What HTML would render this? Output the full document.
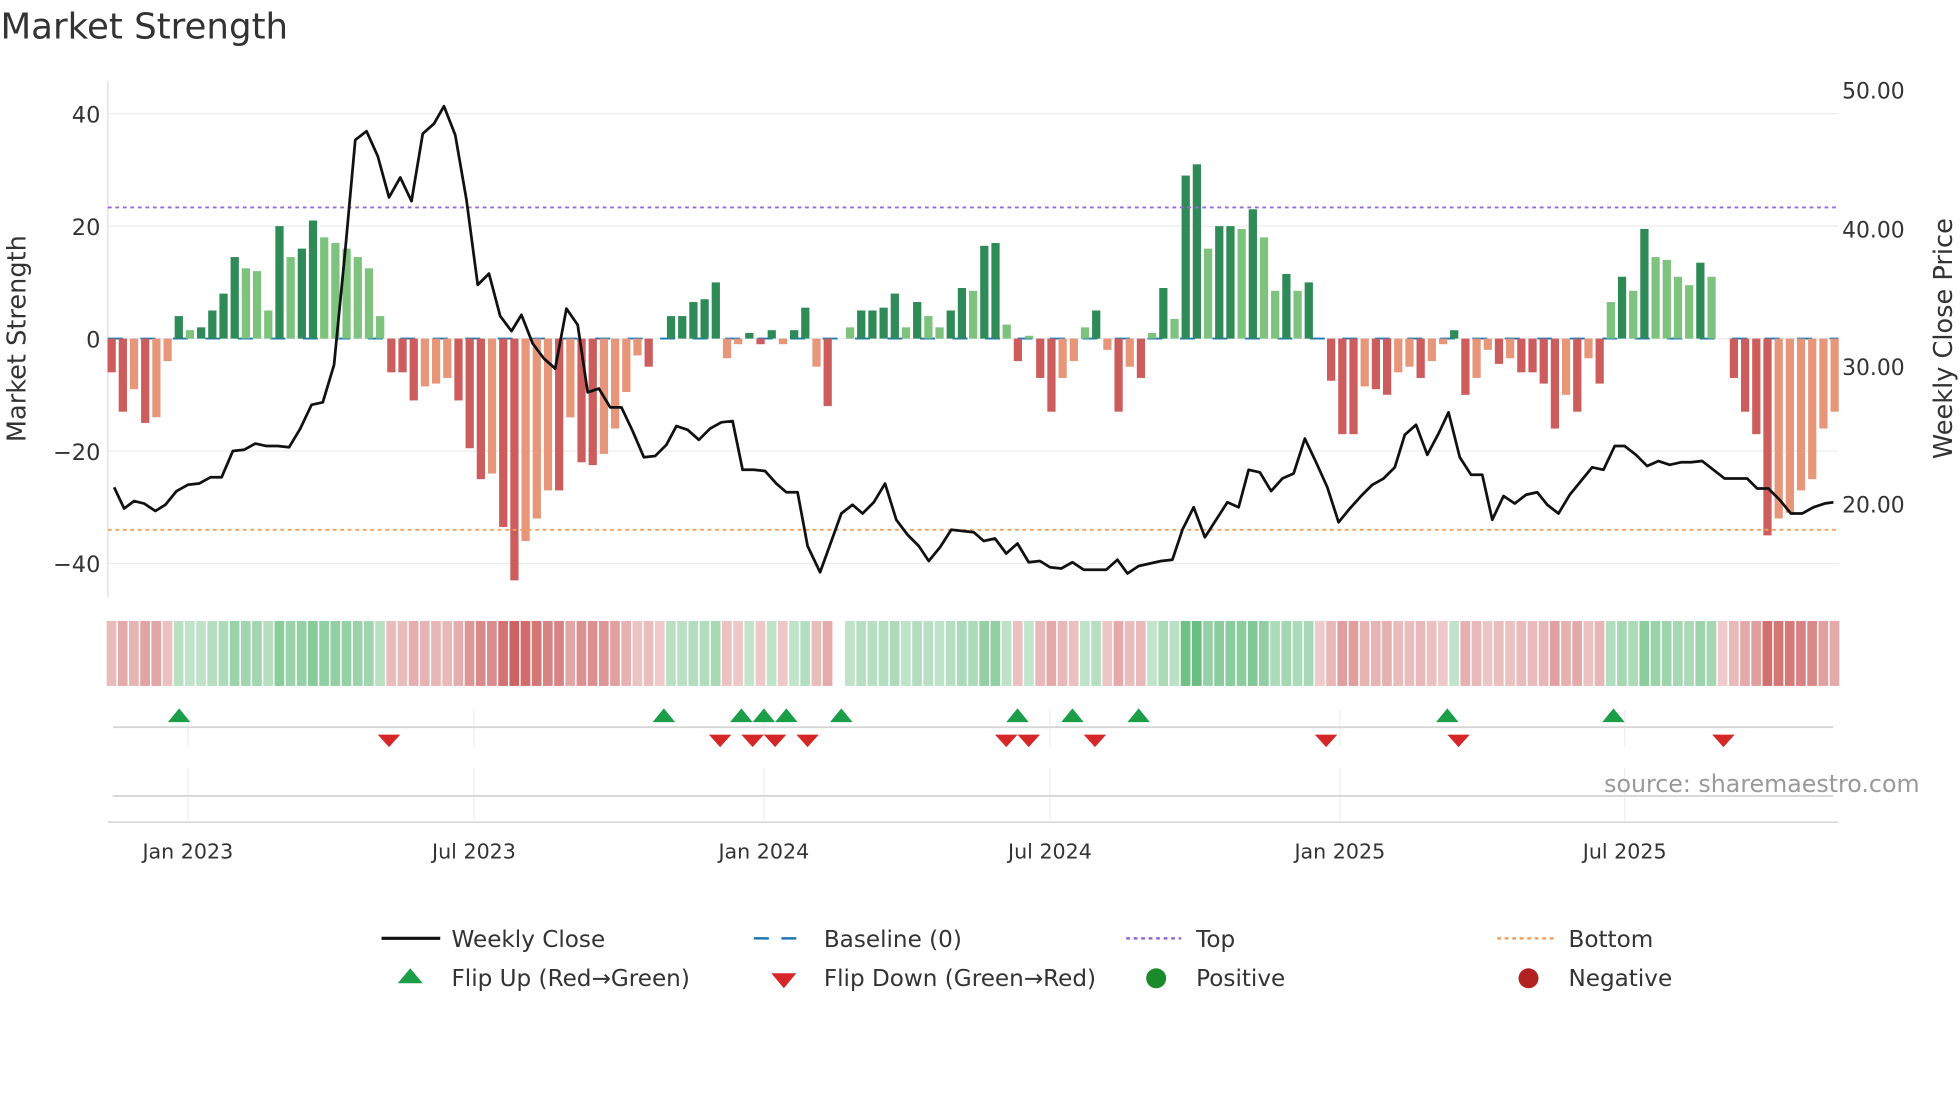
<!DOCTYPE html>
<html><head><meta charset="utf-8"><style>
html,body{margin:0;padding:0;background:#fff;}
svg{display:block;font-family:"DejaVu Sans","Liberation Sans",sans-serif;}
</style></head><body>
<svg id="s" width="1960" height="1102" viewBox="0 0 1568 882" xmlns="http://www.w3.org/2000/svg">
<rect width="1568" height="882" fill="#fff"/>
<text x="0" y="31" font-size="28.5" fill="#333">Market Strength</text>
<g stroke="#ececec" stroke-width="1">
<line x1="86" x2="1471" y1="91" y2="91"/><line x1="86" x2="1471" y1="181" y2="181"/>
<line x1="86" x2="1471" y1="271" y2="271"/><line x1="86" x2="1471" y1="361" y2="361"/>
<line x1="86" x2="1471" y1="451" y2="451"/>
</g>
<line x1="86" x2="86" y1="65" y2="478" stroke="#ddd"/>
<g font-size="18" fill="#333" text-anchor="end">
<text x="80" y="98">40</text><text x="80" y="188">20</text><text x="80" y="278">0</text>
<text x="80" y="368">−20</text><text x="80" y="458">−40</text>
</g>
<g font-size="17.5" fill="#333">
<text x="1474" y="79">50.00</text><text x="1474" y="190">40.00</text>
<text x="1474" y="300">30.00</text><text x="1474" y="410">20.00</text>
</g>
<text transform="translate(20,271) rotate(-90)" font-size="20.5" fill="#333" text-anchor="middle">Market Strength</text>
<text transform="translate(1562,271) rotate(-90)" font-size="20.5" fill="#333" text-anchor="middle">Weekly Close Price</text>
<line x1="86" x2="1471" y1="271" y2="271" stroke="#1f77b4" stroke-width="1.5" stroke-dasharray="12,14"/>
<g id="bars"></g>
<line x1="86" x2="1471" y1="166" y2="166" stroke="#9467dd" stroke-width="1.5" stroke-dasharray="3,3"/>
<line x1="86" x2="1471" y1="424" y2="424" stroke="#f0a060" stroke-width="1.5" stroke-dasharray="3,3"/>
<polyline id="price" fill="none" stroke="#111" stroke-width="2.2" stroke-linejoin="round"/>
<g id="strip"></g>
<g stroke="#eee" stroke-width="1">
<line x1="150" x2="150" y1="568" y2="598"/><line x1="379" x2="379" y1="568" y2="598"/>
<line x1="611" x2="611" y1="568" y2="598"/><line x1="840" x2="840" y1="568" y2="598"/>
<line x1="1072" x2="1072" y1="568" y2="598"/><line x1="1300" x2="1300" y1="568" y2="598"/>
<line x1="150" x2="150" y1="615" y2="656"/><line x1="379" x2="379" y1="615" y2="656"/>
<line x1="611" x2="611" y1="615" y2="656"/><line x1="840" x2="840" y1="615" y2="656"/>
<line x1="1072" x2="1072" y1="615" y2="656"/><line x1="1300" x2="1300" y1="615" y2="656"/>
</g>
<line x1="90" x2="1467" y1="582" y2="582" stroke="#d6d6d6" stroke-width="1.5"/>
<line x1="90" x2="1467" y1="637" y2="637" stroke="#d6d6d6" stroke-width="1.5"/>
<line x1="86" x2="1471" y1="658" y2="658" stroke="#ccc" stroke-width="1"/>
<g id="marks"></g>
<text x="1536" y="634" font-size="19" fill="#999" text-anchor="end">source: sharemaestro.com</text>
<g font-size="16.5" fill="#333" text-anchor="middle">
<text x="150" y="687">Jan 2023</text><text x="379" y="687">Jul 2023</text><text x="611" y="687">Jan 2024</text>
<text x="840" y="687">Jul 2024</text><text x="1072" y="687">Jan 2025</text><text x="1300" y="687">Jul 2025</text>
</g>
<g font-size="18.5" fill="#333">
<line x1="305" x2="352" y1="751" y2="751" stroke="#111" stroke-width="2.5"/>
<text x="361" y="758">Weekly Close</text>
<line x1="603" x2="647" y1="751" y2="751" stroke="#1f77b4" stroke-width="2" stroke-dasharray="12,10"/>
<text x="659" y="758">Baseline (0)</text>
<line x1="901" x2="945" y1="751" y2="751" stroke="#9467dd" stroke-width="2" stroke-dasharray="3,3"/>
<text x="957" y="758">Top</text>
<line x1="1198" x2="1243" y1="751" y2="751" stroke="#f0a060" stroke-width="2" stroke-dasharray="3,3"/>
<text x="1255" y="758">Bottom</text>
<polygon points="318,787 338,787 328,775" fill="#1a9e48"/>
<text x="361" y="789">Flip Up (Red→Green)</text>
<polygon points="617,779 637,779 627,791" fill="#d62728"/>
<text x="659" y="789">Flip Down (Green→Red)</text>
<circle cx="925" cy="783" r="8" fill="#1a8a2a"/>
<text x="957" y="789">Positive</text>
<circle cx="1223" cy="783" r="8" fill="#b22222"/>
<text x="1255" y="789">Negative</text>
</g>
</svg>
<script>
var v=[-6,-13,-9,-15,-14,-4,4,1.5,2,5,8,14.5,12.5,12,5,20,14.5,16,21,18,17,16,14.5,12.5,4,-6,-6,-11,-8.5,-8,-7,-11,-19.5,-25,-24,-33.5,-43,-36,-32,-27,-27,-14,-22,-22.5,-20.5,-16,-9.5,-3,-5,0,4,4,6.5,7,10,-3.5,-1,1,-1,1.5,-1,1.5,5.5,-5,-12,null,2,5,5,5.5,8,2,6.5,4,2,5,9,8.5,16.5,17,2.5,-4,0.5,-7,-13,-7,-4,2,5,-2,-13,-5,-7,1,9,3.5,29,31,16,20,20,19.5,23,18,8.5,11.5,8.5,10,0,-7.5,-17,-17,-8.5,-9,-10,-6,-5,-7,-4,-1,1.5,-10,-7,-2,-4.5,-3.5,-6,-6,-8,-16,-10,-13,-3.5,-8,6.5,11,8.5,19.5,14.5,14,11,9.5,13.5,11,0,-7,-13,-17,-35,-32,-31,-27,-25,-16,-13];
var n=v.length,x0=89,x1=1468,dx=(x1-x0)/(n-1),ns="http://www.w3.org/2000/svg";
function el(t,a,p){var e=document.createElementNS(ns,t);for(var k in a)e.setAttribute(k,a[k]);p.appendChild(e);return e;}
var B=document.getElementById('bars'),S=document.getElementById('strip');
var prev=0;
for(var i=0;i<n;i++){var x=x0+i*dx,val=v[i];if(val===null){continue;}
 var dark=Math.abs(val)>=Math.abs(prev);prev=val;
 var c=val>=0?(dark?'#2e8b57':'#7dc27d'):(dark?'#cd5c5c':'#e8967a');
 var h=Math.abs(val)*4.5,y=val>=0?271-h:271;
 if(h>0.3)el('rect',{x:x-3.3,y:y,width:6.6,height:h,fill:c},B);
 var m=Math.min(Math.abs(val)/40,1),a=0.3+0.6*m;
 var sc=val>=0?'rgba(60,170,90,'+a+')':'rgba(200,80,80,'+a+')';
 if(val===0)sc='rgba(200,80,80,0.3)';
 el('rect',{x:x-dx/2+0.5,y:497,width:dx-1.2,height:52,fill:sc},S);
}
var p="91,390 99,407 107,401 115,403 124,409 132,404 141,393 150,388 159,387 168,382 177,382 186,361 195,360 204,355 213,357 222,357 231,358 240,343 249,324 258,322 267,292 276,200 284,112 293,105 302,125 311,158 320,142 329,161 338,107 347,99 355,85 364,108 373,160 382,228 391,219 400,253 409,265 417,252 426,275 435,287 444,295 453,247 462,260 470,314 479,311 488,326 497,326 506,345 515,366 524,365 533,356 541,341 550,344 559,352 568,343 577,338 586,337 594,376 603,376 612,377 621,387 629,394 638,394 646,437 656,458 664,436 673,411 682,404 690,411 699,402 708,387 717,416 726,428 735,437 743,449 752,438 761,424 770,425 779,426 787,433 796,431 805,443 814,435 823,450 832,449 840,454 849,455 858,450 867,456 876,456 885,456 894,448 902,459 911,453 920,451 929,449 938,448 946,424 955,406 964,430 973,416 982,402 991,406 999,376 1008,378 1017,393 1026,383 1035,379 1044,351 1053,370 1062,390 1071,418 1080,407 1089,397 1098,388 1107,383 1116,374 1124,348 1133,340 1142,364 1151,347 1159,330 1168,366 1177,380 1186,380 1194,416 1203,397 1212,403 1221,396 1230,394 1238,404 1247,411 1256,396 1265,385 1274,374 1283,376 1292,357 1300,357 1309,364 1318,373 1327,369 1336,372 1345,370 1353,370 1362,369 1371,376 1380,383 1389,383 1398,383 1406,391 1415,391 1424,400 1433,411 1442,411 1451,406 1460,403 1467,402";
document.getElementById('price').setAttribute('points',p);
var M=document.getElementById('marks');
[143,531,593,611,629,673,814,858,911,1158,1291].forEach(function(x){el('polygon',{points:(x-9)+',578 '+(x+9)+',578 '+x+',567',fill:'#1a9e48'},M);});
[311,576,602,620,646,805,823,876,1061,1167,1379].forEach(function(x){el('polygon',{points:(x-9)+',588 '+(x+9)+',588 '+x+',598',fill:'#d62728'},M);});
</script>
</body></html>
